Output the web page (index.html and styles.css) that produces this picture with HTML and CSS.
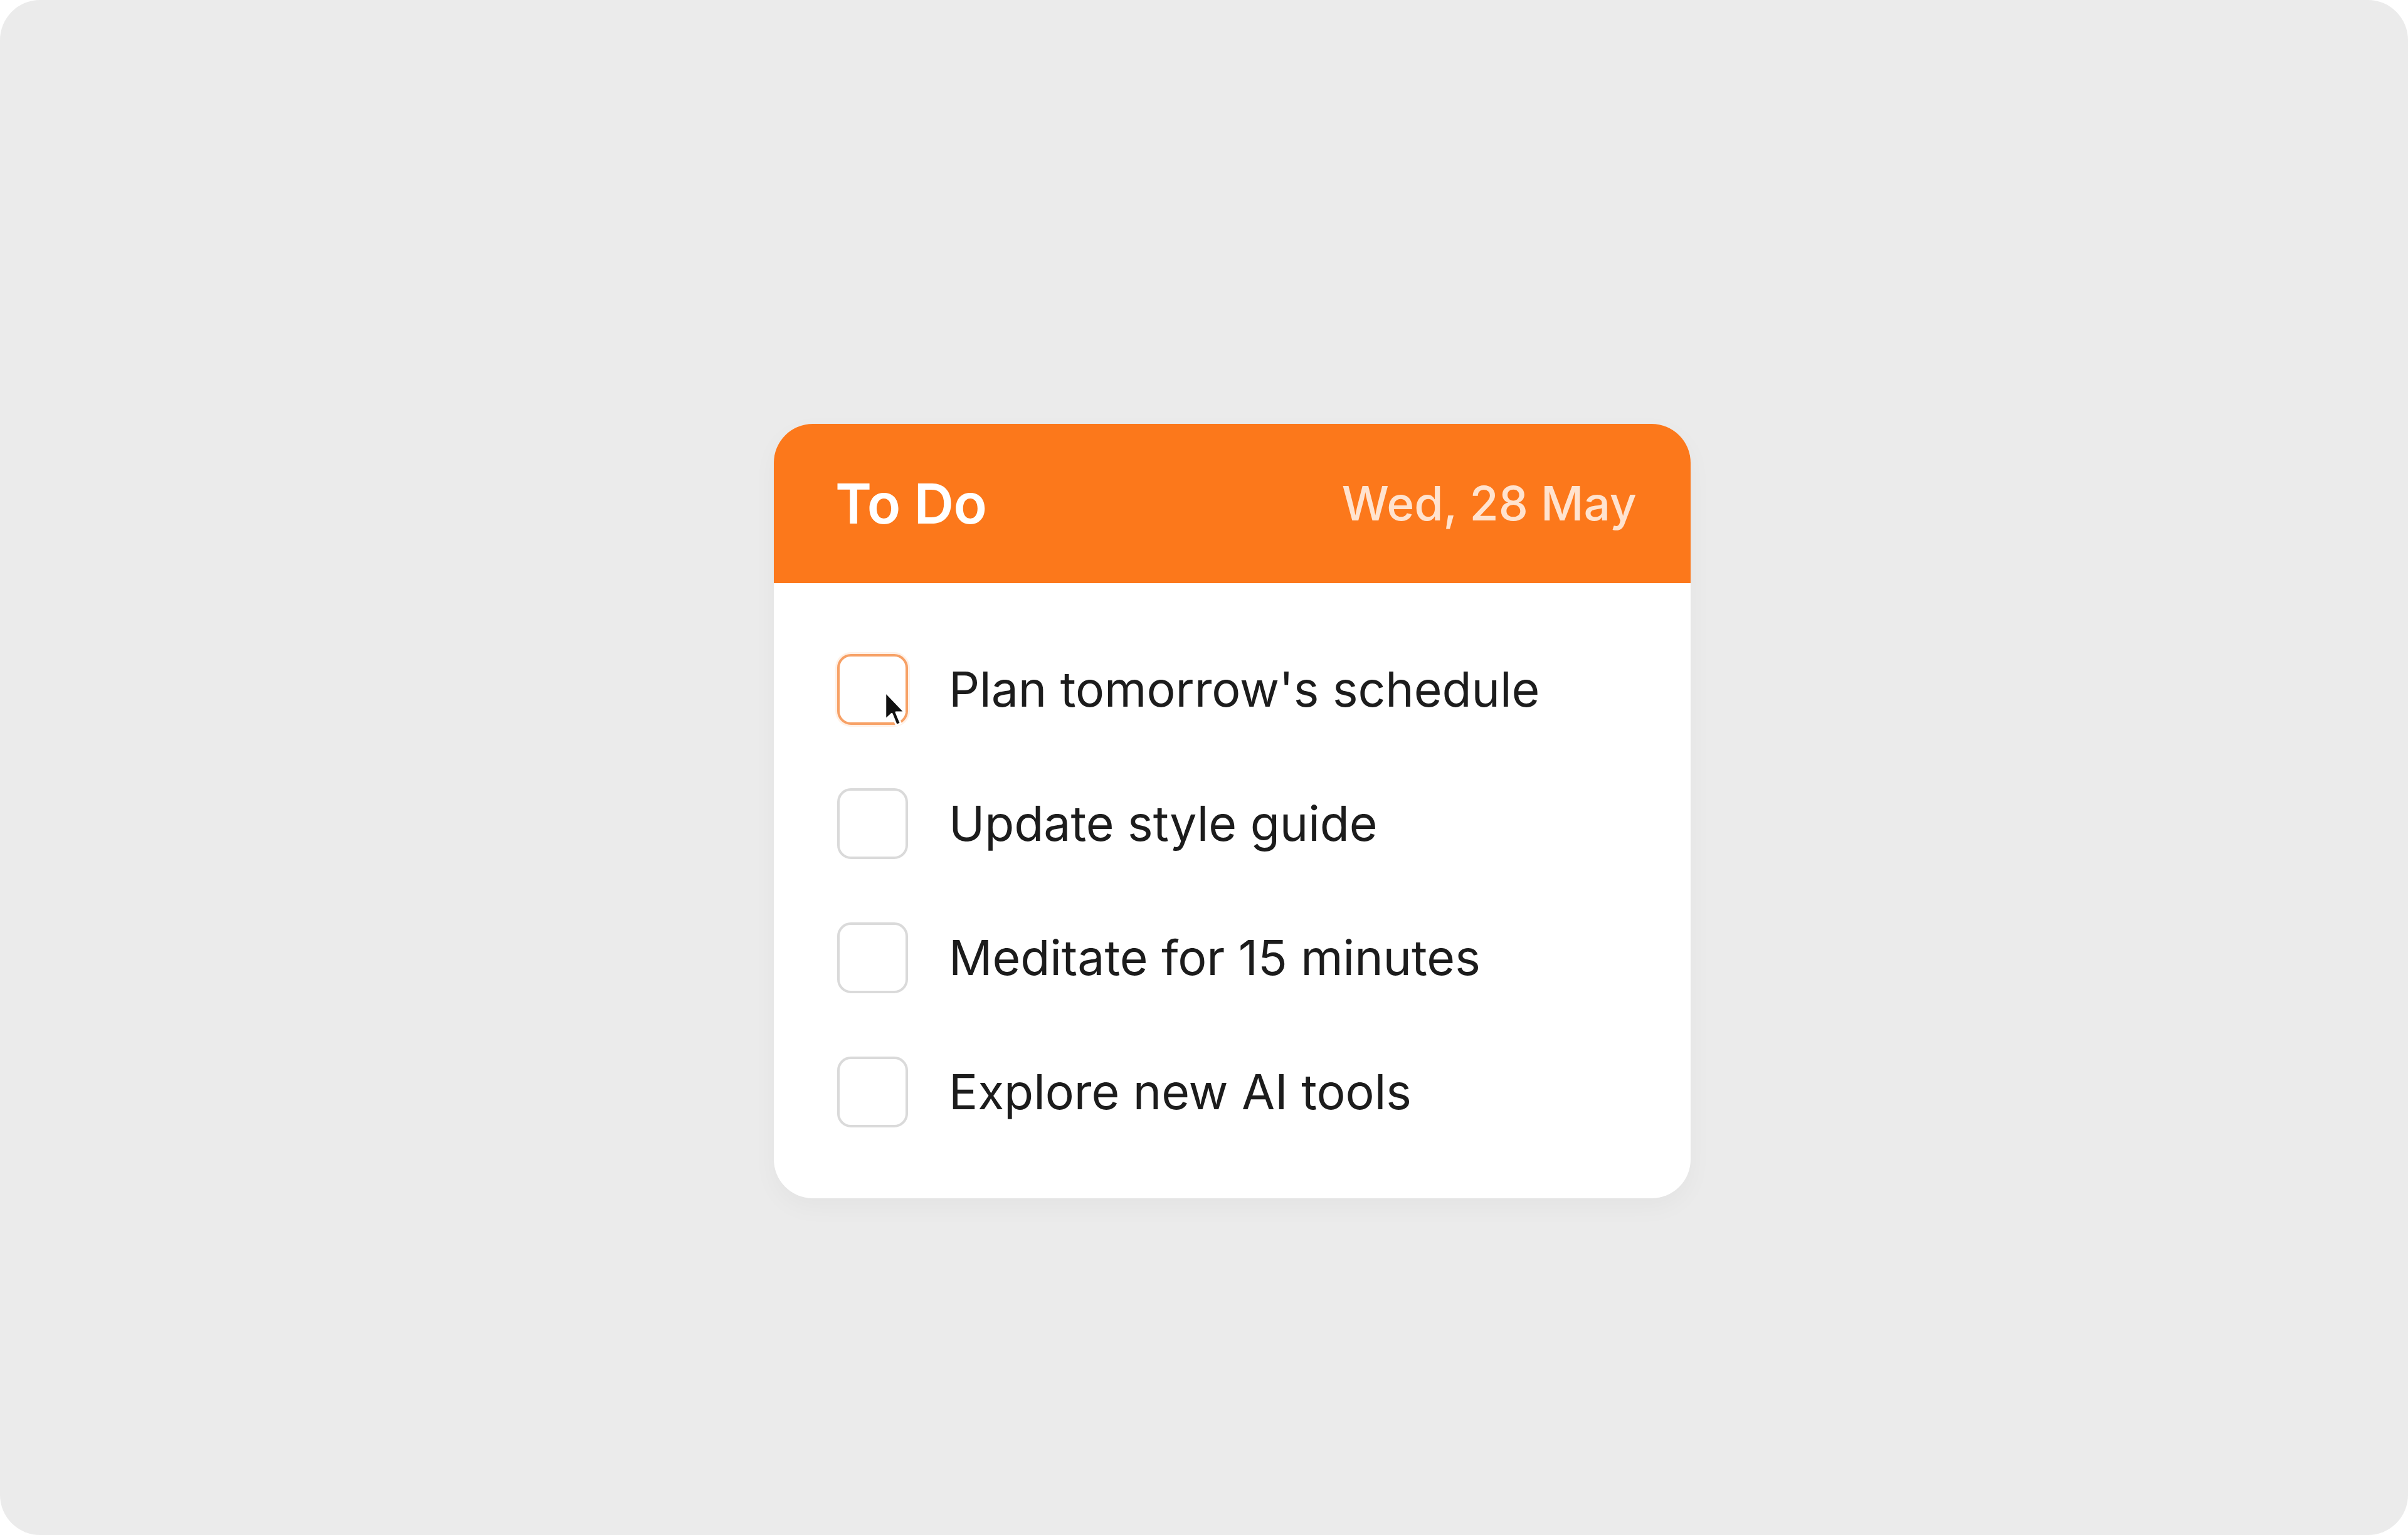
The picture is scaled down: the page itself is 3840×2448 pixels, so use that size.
FILE: index.html
```html
<!DOCTYPE html>
<html lang="en">
<head>
<meta charset="utf-8">
<title>To Do</title>
<link rel="stylesheet" href="styles.css">
</head>
<body>
<div class="screen">
  <div class="card">
    <div class="card-header">
      <span class="title">To Do</span>
      <span class="date">Wed, 28 May</span>
    </div>
    <ul class="tasks">
      <li class="task">
        <span class="box box-active">
          <svg class="cursor" viewBox="0 0 16 26" width="40" height="64" aria-hidden="true">
            <path d="M1 1 L1 19 L5.2 15.2 L8.2 22.6 L11 21.4 L8 14.2 L13.6 14.2 Z" fill="#111" stroke="#fff" stroke-width="1.2" stroke-linejoin="round"/>
          </svg>
        </span>
        <span class="label">Plan tomorrow's schedule</span>
      </li>
      <li class="task">
        <span class="box"></span>
        <span class="label">Update style guide</span>
      </li>
      <li class="task">
        <span class="box"></span>
        <span class="label">Meditate for 15 minutes</span>
      </li>
      <li class="task">
        <span class="box"></span>
        <span class="label">Explore new AI tools</span>
      </li>
    </ul>
  </div>
</div>
</body>
</html>
```

FILE: styles.css
```css
html, body {
  margin: 0;
  padding: 0;
  background: #ffffff;
}

.screen {
  width: 3840px;
  height: 2448px;
  box-sizing: border-box;
  background: #ebebeb;
  border-radius: 64px;
  display: flex;
  justify-content: center;
  align-items: center;
  padding: 138px 0 0 90px;
  font-family: Inter, "Noto Sans", sans-serif;
}

.card {
  width: 1462px;
  background: #ffffff;
  border-radius: 62px;
  overflow: hidden;
  box-shadow: 0 14px 40px rgba(0, 0, 0, 0.035);
}

.card-header {
  height: 254px;
  box-sizing: border-box;
  background: #fc781b;
  display: flex;
  align-items: center;
  justify-content: space-between;
  padding: 0 86px 0 98px;
}

.title {
  color: #ffffff;
  font-size: 88px;
  font-weight: 600;
  letter-spacing: -0.5px;
}

.date {
  color: #ffe3cf;
  font-size: 75px;
  font-weight: 500;
}

.tasks {
  list-style: none;
  margin: 0;
  padding: 113px 96px 113px 101px;
  display: flex;
  flex-direction: column;
  gap: 101px;
}

.task {
  display: flex;
  align-items: center;
  gap: 65px;
  height: 113px;
}

.box {
  position: relative;
  width: 113px;
  height: 113px;
  box-sizing: border-box;
  border: 4px solid #dadada;
  border-radius: 22px;
  background: #ffffff;
  flex-shrink: 0;
}

.box-active {
  border-color: #f7a166;
  box-shadow: 0 0 0 3px rgba(252, 140, 60, 0.12);
}

.cursor {
  position: absolute;
  left: 70px;
  top: 54px;
}

.label {
  color: #1c1c1c;
  font-size: 77px;
  font-weight: 400;
  letter-spacing: -0.1px;
}
```
